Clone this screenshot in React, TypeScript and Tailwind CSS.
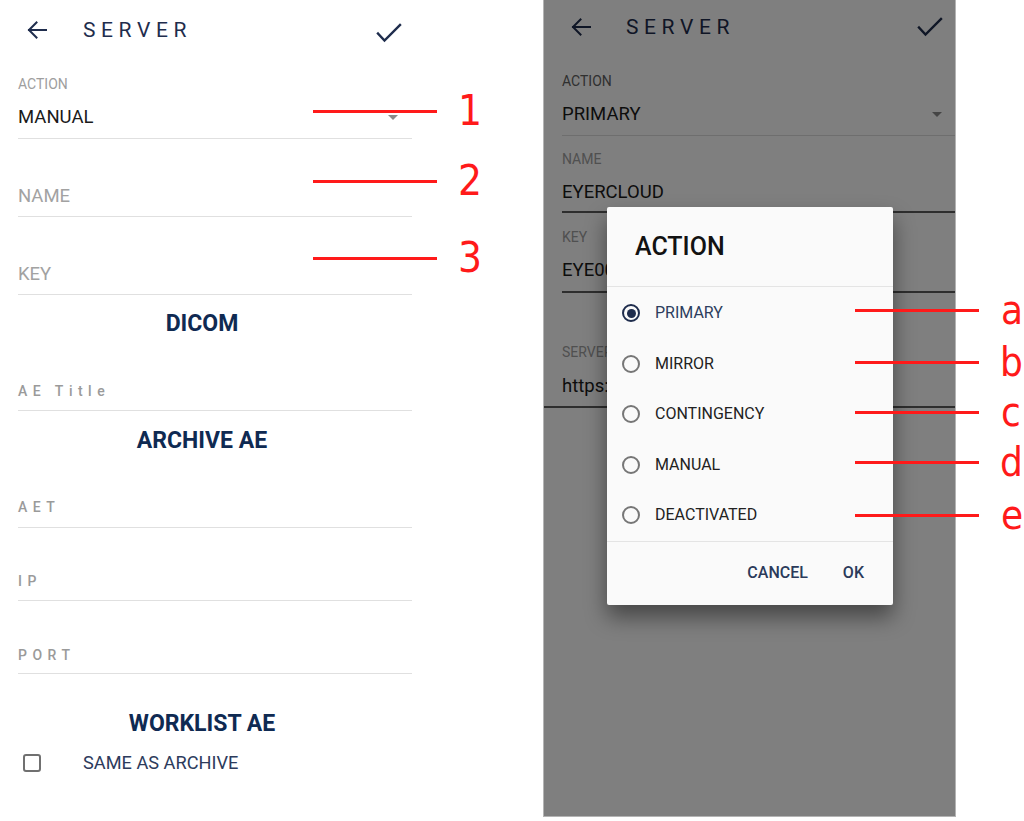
import React from 'react';

function BackArrow() {
  return (
    <svg width="20" height="18" viewBox="0 0 20 18" fill="none" stroke="#1f2d4d" strokeWidth="2" strokeLinecap="square">
      <path d="M19 9H2" />
      <path d="M9.5 1.5 2 9l7.5 7.5" />
    </svg>
  );
}

function CheckMark() {
  return (
    <svg width="26" height="20" viewBox="0 0 26 20" fill="none" stroke="#1f2d4d" strokeWidth="2.4" strokeLinecap="square">
      <path d="M2 10.5 8.5 17.5 24 2" />
    </svg>
  );
}

function Caret() {
  return <span className="w-0 h-0 border-l-[5px] border-r-[5px] border-t-[5px] border-l-transparent border-r-transparent border-t-[#8a8a8a]" />;
}

function Radio({ checked }: { checked?: boolean }) {
  return checked ? (
    <span className="w-[18px] h-[18px] rounded-full border-2 border-[#1f2d4d] flex items-center justify-center">
      <span className="w-[9px] h-[9px] rounded-full bg-[#1f2d4d]" />
    </span>
  ) : (
    <span className="w-[18px] h-[18px] rounded-full border-2 border-[#767676]" />
  );
}

const OPTIONS = ['PRIMARY', 'MIRROR', 'CONTINGENCY', 'MANUAL', 'DEACTIVATED'];

function LeftScreen() {
  return (
    <div className="w-[430px] shrink-0">
      <header className="h-[60px] flex items-center">
        <div className="pl-[27px] flex"><BackArrow /></div>
        <span className="ml-[36px] text-[21px] leading-[24px] tracking-[5.6px] text-[#1f2d4d]">SERVER</span>
        <div className="ml-auto mr-[28px] mt-[6px] flex"><CheckMark /></div>
      </header>

      <div className="mx-[18px] h-[79px] border-b border-[#e0e0e0] pt-[16px]">
        <div className="text-[14px] leading-[16px] text-[#9e9e9e]">ACTION</div>
        <div className="mt-[13px] h-[24px] flex items-center">
          <span className="text-[18.5px] leading-[24px] text-[#1a1a1a]">MANUAL</span>
          <span className="ml-auto mr-[14px] flex"><Caret /></span>
        </div>
      </div>
      <div className="mx-[18px] h-[78px] border-b border-[#e0e0e0] pt-[45px] text-[18.5px] leading-[24px] text-[#a2a2a2]">NAME</div>
      <div className="mx-[18px] h-[78px] border-b border-[#e0e0e0] pt-[45px] text-[18.5px] leading-[24px] text-[#a2a2a2]">KEY</div>

      <div className="w-[404px] h-[43px] pt-[15px] text-center text-[23px] leading-[28px] font-bold text-[#0f2a52]">DICOM</div>
      <div className="mx-[18px] h-[73px] border-b border-[#e0e0e0] pt-[43px] text-[14px] leading-[20px] font-medium tracking-[5.5px] text-[#9a9a9a]">AE Title</div>

      <div className="w-[404px] h-[44px] pt-[16px] text-center text-[23px] leading-[28px] font-bold text-[#0f2a52]">ARCHIVE AE</div>
      <div className="mx-[18px] h-[73px] border-b border-[#e0e0e0] pt-[42px] text-[14px] leading-[20px] font-medium tracking-[5.5px] text-[#9a9a9a]">AET</div>
      <div className="mx-[18px] h-[73px] border-b border-[#e0e0e0] pt-[43px] text-[14px] leading-[20px] font-medium tracking-[5.5px] text-[#9a9a9a]">IP</div>
      <div className="mx-[18px] h-[73px] border-b border-[#e0e0e0] pt-[44px] text-[14px] leading-[20px] font-medium tracking-[5.5px] text-[#9a9a9a]">PORT</div>

      <div className="w-[404px] h-[64px] pt-[36px] text-center text-[23px] leading-[28px] font-bold text-[#0f2a52]">WORKLIST AE</div>
      <div className="mt-[13px] h-[24px] flex items-center">
        <span className="ml-[23px] w-[18px] h-[18px] rounded-[3px] border-2 border-[#707070]" />
        <span className="ml-[42px] text-[18.2px] leading-[24px] text-[#2d3b5c]">SAME AS ARCHIVE</span>
      </div>
    </div>
  );
}

function RightScreen() {
  return (
    <div className="relative w-[413px] h-[817px] shrink-0 bg-white border-x border-b border-[#b4b4b4] overflow-hidden">
      <header className="h-[54px] flex items-center">
        <div className="pl-[27px] flex"><BackArrow /></div>
        <span className="ml-[35px] text-[21px] leading-[24px] tracking-[5.6px] text-[#1f2d4d]">SERVER</span>
        <div className="ml-auto mr-[12px] flex"><CheckMark /></div>
      </header>

      <div className="ml-[18px] h-[82px] border-b border-[#dcdcdc] pt-[19px]">
        <div className="text-[14px] leading-[16px] text-[#606060]">ACTION</div>
        <div className="mt-[13px] h-[24px] flex items-center">
          <span className="text-[18.5px] leading-[24px] text-[#1a1a1a]">PRIMARY</span>
          <span className="ml-auto mr-[13px] flex"><Caret /></span>
        </div>
      </div>
      <div className="ml-[18px] h-[77px] border-b-2 border-[#5c5c5c] pt-[15px]">
        <div className="text-[14px] leading-[16px] text-[#a0a0a0]">NAME</div>
        <div className="mt-[13px] text-[18.5px] leading-[24px] text-[#1a1a1a]">EYERCLOUD</div>
      </div>
      <div className="ml-[18px] h-[80px] border-b-2 border-[#5c5c5c] pt-[16px]">
        <div className="text-[14px] leading-[16px] text-[#a0a0a0]">KEY</div>
        <div className="mt-[13px] text-[18.5px] leading-[24px] text-[#1a1a1a]">EYE0001</div>
      </div>
      <div className="h-[115px] border-b-2 border-[#5c5c5c] pl-[18px] pt-[51px]">
        <div className="text-[14px] leading-[16px] text-[#a0a0a0]">SERVER</div>
        <div className="mt-[14px] text-[18.5px] leading-[24px] text-[#1a1a1a]">https://eyercloud.com</div>
      </div>

      <div className="absolute inset-0 bg-black/50" />

      <div className="absolute left-[63px] top-[207px] w-[286px] h-[398px] bg-[#fafafa] rounded-[2px] shadow-[0_12px_22px_rgba(0,0,0,0.45)] flex flex-col">
        <div className="h-[80px] shrink-0 border-b border-[#e4e4e4] flex items-center pl-[28px] text-[25px] font-medium text-[#121212]">ACTION</div>
        <div className="pt-[1px] border-b border-[#e4e4e4]">
          {OPTIONS.map((o, i) => (
            <div key={o} className="h-[50.5px] flex items-center pl-[15px]">
              <Radio checked={i === 0} />
              <span className={`ml-[15px] text-[16px] leading-[20px] ${i === 0 ? 'text-[#2d3e5e]' : 'text-[#222222]'}`}>{o}</span>
            </div>
          ))}
        </div>
        <div className="flex-1 flex items-center justify-end gap-[35px] pr-[29px] text-[16px] font-medium text-[#2b3a5a]">
          <span>CANCEL</span>
          <span>OK</span>
        </div>
      </div>
    </div>
  );
}

export default function App() {
  const red = 'bg-[#ff1a1a]';
  return (
    <div className="relative w-[1024px] h-[821px] bg-white overflow-hidden flex font-['Roboto',sans-serif]">
      <div className="w-[543px] shrink-0">
        <LeftScreen />
      </div>
      <RightScreen />

      {/* annotations */}
      <div className="absolute inset-0 pointer-events-none font-['DejaVu_Sans_Condensed','DejaVu_Sans',sans-serif] leading-none text-[#ff1a1a]">
        <div className="absolute left-[313px] top-[111px] -translate-y-1/2 flex items-center text-[42px]">
          <span className={`w-[124px] h-[3px] ${red}`} /><span className="ml-[21px]">1</span>
        </div>
        <div className="absolute left-[313px] top-[181px] -translate-y-1/2 flex items-center text-[42px]">
          <span className={`w-[124px] h-[3px] ${red}`} /><span className="ml-[21px]">2</span>
        </div>
        <div className="absolute left-[313px] top-[258px] -translate-y-1/2 flex items-center text-[42px]">
          <span className={`w-[124px] h-[3px] ${red}`} /><span className="ml-[21px]">3</span>
        </div>

        <div className="absolute left-[855px] top-[310px] -translate-y-1/2 flex items-center text-[40px]">
          <span className={`w-[124px] h-[3px] ${red}`} /><span className="ml-[22px]">a</span>
        </div>
        <div className="absolute left-[855px] top-[362px] -translate-y-1/2 flex items-center text-[40px]">
          <span className={`w-[124px] h-[3px] ${red}`} /><span className="ml-[21px]">b</span>
        </div>
        <div className="absolute left-[855px] top-[412px] -translate-y-1/2 flex items-center text-[40px]">
          <span className={`w-[124px] h-[3px] ${red}`} /><span className="ml-[22px]">c</span>
        </div>
        <div className="absolute left-[855px] top-[462px] -translate-y-1/2 flex items-center text-[40px]">
          <span className={`w-[124px] h-[3px] ${red}`} /><span className="ml-[21px]">d</span>
        </div>
        <div className="absolute left-[855px] top-[515px] -translate-y-1/2 flex items-center text-[40px]">
          <span className={`w-[124px] h-[3px] ${red}`} /><span className="ml-[22px]">e</span>
        </div>
      </div>
    </div>
  );
}
